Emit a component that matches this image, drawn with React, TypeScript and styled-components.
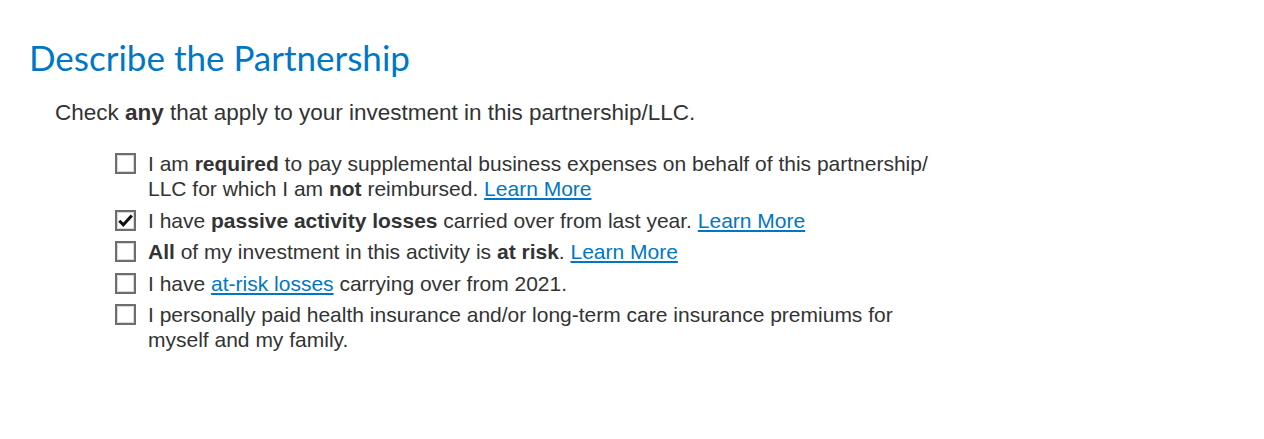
import React, { useState } from 'react';
import styled, { createGlobalStyle } from 'styled-components';

const GlobalStyle = createGlobalStyle`
  body {
    margin: 0;
    background: #ffffff;
  }
`;

const Page = styled.div`
  padding: 36px 29px 0 29px;
  font-family: "Liberation Sans", Arial, sans-serif;
  color: #333333;
`;

const Title = styled.h1`
  margin: 0;
  font-family: Lato, "Open Sans", sans-serif;
  font-size: 35px;
  font-weight: 400;
  line-height: 42px;
  color: #0077c5;
`;

const Intro = styled.p`
  margin: 22px 0 0 26px;
  font-size: 22.5px;
  line-height: 26px;
  color: #333333;
`;

const OptionList = styled.div`
  display: flex;
  flex-direction: column;
  gap: 6.5px;
  margin: 25px 0 0 86px;
`;

const Option = styled.label`
  display: flex;
  align-items: flex-start;
  gap: 12px;
  font-size: 21px;
  line-height: 25px;
  cursor: pointer;
`;

const Box = styled.span<{ checked: boolean }>`
  flex: none;
  width: 21px;
  height: 21px;
  margin-top: 2px;
  box-sizing: border-box;
  border: 2px solid #6e6e6e;
  box-shadow: inset 0 0 0 1px #d9d9d9;
  background: #ffffff;
  display: flex;
  align-items: center;
  justify-content: center;
  color: #111111;
`;

const HiddenInput = styled.input`
  position: absolute;
  opacity: 0;
  pointer-events: none;
`;

const Text = styled.span`
  white-space: nowrap;
`;

const Link = styled.a`
  color: #0077c5;
  text-decoration: underline;
`;

const Check = () => (
  <svg width="15" height="13" viewBox="0 0 15 13">
    <path d="M1.3 6.8 L5.3 10.8 L13.8 1.4" fill="none" stroke="currentColor" strokeWidth="3" />
  </svg>
);

const options: { id: string; content: React.ReactNode }[] = [
  {
    id: 'required',
    content: (
      <>
        I am <b>required</b> to pay supplemental business expenses on behalf of this partnership/
        <br />
        LLC for which I am <b>not</b> reimbursed. <Link href="#">Learn More</Link>
      </>
    ),
  },
  {
    id: 'passive',
    content: (
      <>
        I have <b>passive activity losses</b> carried over from last year. <Link href="#">Learn More</Link>
      </>
    ),
  },
  {
    id: 'atrisk',
    content: (
      <>
        <b>All</b> of my investment in this activity is <b>at risk</b>. <Link href="#">Learn More</Link>
      </>
    ),
  },
  {
    id: 'carryover',
    content: (
      <>
        I have <Link href="#">at-risk losses</Link> carrying over from 2021.
      </>
    ),
  },
  {
    id: 'health',
    content: (
      <>
        I personally paid health insurance and/or long-term care insurance premiums for
        <br />
        myself and my family.
      </>
    ),
  },
];

const App: React.FC = () => {
  const [checked, setChecked] = useState<Record<string, boolean>>({ passive: true });

  return (
    <Page>
      <GlobalStyle />
      <Title>Describe the Partnership</Title>
      <Intro>
        Check <b>any</b> that apply to your investment in this partnership/LLC.
      </Intro>
      <OptionList>
        {options.map((opt) => (
          <Option key={opt.id}>
            <HiddenInput
              type="checkbox"
              checked={!!checked[opt.id]}
              onChange={(e) => setChecked((prev) => ({ ...prev, [opt.id]: e.target.checked }))}
            />
            <Box checked={!!checked[opt.id]}>{checked[opt.id] && <Check />}</Box>
            <Text>{opt.content}</Text>
          </Option>
        ))}
      </OptionList>
    </Page>
  );
};

export default App;
